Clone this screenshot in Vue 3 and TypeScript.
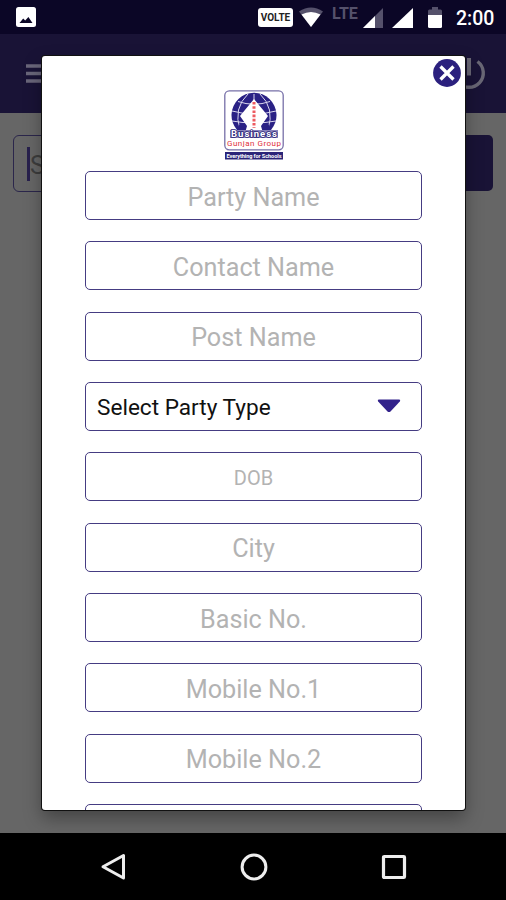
<script setup lang="ts">
interface Field {
  label: string
  kind: 'text' | 'select' | 'date'
}

const fields: Field[] = [
  { label: 'Party Name', kind: 'text' },
  { label: 'Contact Name', kind: 'text' },
  { label: 'Post Name', kind: 'text' },
  { label: 'Select Party Type', kind: 'select' },
  { label: 'DOB', kind: 'date' },
  { label: 'City', kind: 'text' },
  { label: 'Basic No.', kind: 'text' },
  { label: 'Mobile No.1', kind: 'text' },
  { label: 'Mobile No.2', kind: 'text' },
  { label: '', kind: 'text' },
]
</script>

<template>
  <div class="screen">
    <div class="status">
      <svg class="photo" width="20" height="20" viewBox="0 0 20 20">
        <rect width="20" height="20" rx="2.5" fill="#fff" />
        <path d="M3.5 16 L7.2 11.6 L9.2 13.6 L12.4 10 L16.5 16 Z" fill="#0b0626" />
      </svg>
      <div class="indicators">
        <span class="volte">VOLTE</span>
        <svg class="wifi" width="26" height="21" viewBox="0 0 26 21">
          <path d="M1 4.5 Q13 -3.5 25 4.5 L13 20 Z" fill="#55516b" />
          <path d="M3.500 7.500 Q13 2.500 22.500 7.500 L13 20 Z" fill="#fff" />
        </svg>
        <span class="lte">LTE</span>
        <svg class="signal-low" width="20" height="20" viewBox="0 0 20 20">
          <path d="M0 20 L20 0 V20 Z" fill="#55516b" />
          <path d="M0 20 L12 8 V20 Z" fill="#fff" />
        </svg>
        <svg class="signal" width="21" height="20" viewBox="0 0 21 20">
          <path d="M0 20 L21 0 V20 Z" fill="#fff" />
        </svg>
        <svg class="battery" width="14" height="21" viewBox="0 0 14 21">
          <path d="M4 0 H10 V2.5 H12.5 Q14 2.5 14 4 V9 H0 V4 Q0 2.5 1.5 2.5 H4 Z" fill="#55516b" />
          <path d="M0 8 H14 V19.5 Q14 21 12.5 21 H1.5 Q0 21 0 19.5 Z" fill="#fff" />
        </svg>
        <span class="clock">2:00</span>
      </div>
    </div>

    <header class="toolbar">
      <svg width="24" height="20" viewBox="0 0 24 20">
        <path d="M0 2 H24 M0 9.5 H24 M0 17 H24" stroke="#69667a" stroke-width="3.4" />
      </svg>
      <svg width="34" height="34" viewBox="0 0 34 34" fill="none" stroke="#696775">
        <path d="M17 1 V18.5" stroke-width="4" />
        <path d="M25.5 4.5 A14.3 14.3 0 1 1 8.5 4.5" stroke-width="3.4" />
      </svg>
    </header>

    <main class="page">
      <div class="search">
        <div class="search-box"><i class="caret"></i><span>Search</span></div>
        <div class="search-button"></div>
      </div>
    </main>

    <nav class="navbar">
      <svg width="26" height="28" viewBox="0 0 26 28">
        <path d="M23.5 2.5 V25 L3 13.8 Z" fill="none" stroke="#eee" stroke-width="3" stroke-linejoin="round" />
      </svg>
      <svg width="28" height="28" viewBox="0 0 28 28">
        <circle cx="14" cy="14" r="11.9" fill="none" stroke="#eee" stroke-width="3" />
      </svg>
      <svg width="26" height="26" viewBox="0 0 26 26">
        <rect x="2.5" y="2.5" width="21" height="21" rx=".8" fill="none" stroke="#eee" stroke-width="3.2" />
      </svg>
    </nav>

    <section class="dialog">
      <div class="form">
        <svg class="logo" width="60" height="71" viewBox="0 0 60 71">
          <rect x=".8" y=".8" width="58.4" height="59" rx="4.5" fill="#fff" stroke="#7770a8" stroke-width="1.3" />
          <path d="M13 40 A22.500 22.500 0 1 1 47 40 Z" fill="#2a2185" />
          <g fill="none" stroke="#d9d6ee" stroke-width="1">
            <path d="M14 11.500 Q30 17 46 11.500 M8 21 Q30 27 52 21 M8 31 Q30 35 52 31" />
            <path d="M24 4 Q9 18 16 40 M36 4 Q51 18 44 40 M30 4 V12" />
          </g>
          <path d="M30 9 L44 26 L37 36 L39 43 H21 L23 36 L16 26 Z" fill="#fff" />
          <path d="M15 34 L22 43 H12 Z M45 34 L38 43 H48 Z" fill="#2a2185" />
          <path d="M30 12 V38" stroke="#ed5b60" stroke-width="3" stroke-dasharray="2.6 1.6" />
          <rect x="6" y="40" width="48" height="8" fill="#8983bb" />
          <text class="brand" x="30" y="47.3" text-anchor="middle" textLength="46">Business</text>
          <text class="group" x="30" y="56.4" text-anchor="middle" textLength="54">Gunjan Group</text>
          <rect x="1" y="62" width="58" height="7.500" fill="#2b2478" />
          <text class="slogan" x="30" y="67.7" text-anchor="middle" textLength="55">Everything for Schools</text>
        </svg>
        <div v-for="(field, index) in fields" :key="index" class="field" :class="field.kind">
          <span>{{ field.label }}</span>
          <svg v-if="field.kind === 'select'" width="24" height="14" viewBox="0 0 24 14">
            <path d="M1.8 .6 H22.2 Q24 .8 22.8 2.4 L13.5 12.4 Q12 13.8 10.5 12.4 L1.200 2.400 Q0 .8 1.800 .6 Z" fill="#32228b" />
          </svg>
        </div>
      </div>
      <button class="close" type="button" aria-label="Close">
        <svg width="28" height="28" viewBox="0 0 28 28">
          <circle cx="14" cy="14" r="13.9" fill="#2b207e" />
          <path d="M7.5 7.5 L20.5 20.5 M20.5 7.5 L7.5 20.5" stroke="#fff" stroke-width="3.3" />
        </svg>
      </button>
    </section>
  </div>
</template>

<style>
body {
  margin: 0;
}
</style>

<style scoped>
.screen {
  position: relative;
  display: flex;
  flex-direction: column;
  width: 506px;
  height: 900px;
  overflow: hidden;
  background: #666;
  font-family: Roboto, "Liberation Sans", sans-serif;
}
svg {
  display: block;
  flex: none;
}
.status {
  display: flex;
  justify-content: space-between;
  box-sizing: border-box;
  height: 34px;
  padding: 7px 11px 0 16px;
  background: #0b0626;
}
.indicators {
  display: flex;
  align-items: flex-start;
}
.volte {
  box-sizing: border-box;
  width: 35px;
  height: 19px;
  margin: 1px 5px 0 2px;
  border-radius: 3px;
  background: #fff;
  color: #222;
  font: 700 10px/19px Roboto, sans-serif;
  text-align: center;
}
.wifi {
  margin-right: 8px;
}
.lte {
  width: 26px;
  margin-right: 5px;
  color: #55516b;
  font-size: 16px;
  font-weight: 700;
  line-height: 14px;
}
.signal-low {
  margin: 1px 9px 0 0;
}
.signal {
  margin: 1px 15px 0 0;
}
.battery {
  margin-right: 14px;
}
.clock {
  width: 39px;
  color: #fff;
  font-size: 19.5px;
  font-weight: 500;
  line-height: 23px;
  white-space: nowrap;
}
.toolbar {
  display: flex;
  justify-content: space-between;
  align-items: center;
  box-sizing: border-box;
  height: 79px;
  padding: 0 20px 0 26px;
  background: #191336;
}
.page {
  flex: 1;
  padding: 22px 13px 0;
}
.search {
  display: flex;
  justify-content: space-between;
}
.search-box {
  display: flex;
  align-items: center;
  box-sizing: border-box;
  width: 350px;
  height: 57px;
  padding-left: 13px;
  border: 1.5px solid #2b264b;
  border-radius: 6px;
  color: #3d3d3d;
  font-size: 25px;
}
.search-box span {
  padding-top: 3px;
}
.caret {
  width: 3px;
  height: 34px;
  background: #27204d;
}
.search-button {
  width: 100px;
  height: 56px;
  border-radius: 5px;
  background: #191336;
}
.navbar {
  display: flex;
  justify-content: space-between;
  align-items: center;
  box-sizing: border-box;
  height: 67px;
  padding: 0 99px 0 100px;
  background: #000;
}
.dialog {
  position: absolute;
  top: 56px;
  left: 42px;
  box-sizing: border-box;
  width: 423px;
  height: 754px;
  border-radius: 3px;
  background: #fff;
  box-shadow: 0 0 0 1px #111, 0 8px 18px rgba(0, 0, 0, 0.35);
}
.form {
  display: flex;
  flex-direction: column;
  align-items: center;
  gap: 21.35px;
  box-sizing: border-box;
  height: 100%;
  padding-top: 34px;
  overflow: hidden;
}
.logo {
  margin-bottom: -11.35px;
}
.brand {
  fill: #fff;
  stroke: #2b2478;
  stroke-width: 1.6px;
  paint-order: stroke;
  font-size: 9.5px;
  font-weight: 700;
}
.group {
  fill: #e02f3c;
  font-size: 8px;
}
.slogan {
  fill: #fff;
  font-size: 5.6px;
  font-weight: 700;
}
.field {
  display: flex;
  flex: none;
  align-items: center;
  justify-content: center;
  box-sizing: border-box;
  width: 337px;
  height: 49px;
  padding-top: 4px;
  border: 1px solid #453c82;
  border-radius: 5px;
  color: #b3b3b3;
  font-size: 25.2px;
  line-height: 30px;
}
.select {
  justify-content: space-between;
  padding: 3px 20px 0 11px;
  color: #111;
  font-size: 22.6px;
}
.select svg {
  margin-top: -4px;
}
.date {
  padding-top: 2px;
  font-size: 20px;
}
.close {
  position: absolute;
  top: 3px;
  right: 4px;
  padding: 0;
  border: 0;
  background: none;
}
</style>
